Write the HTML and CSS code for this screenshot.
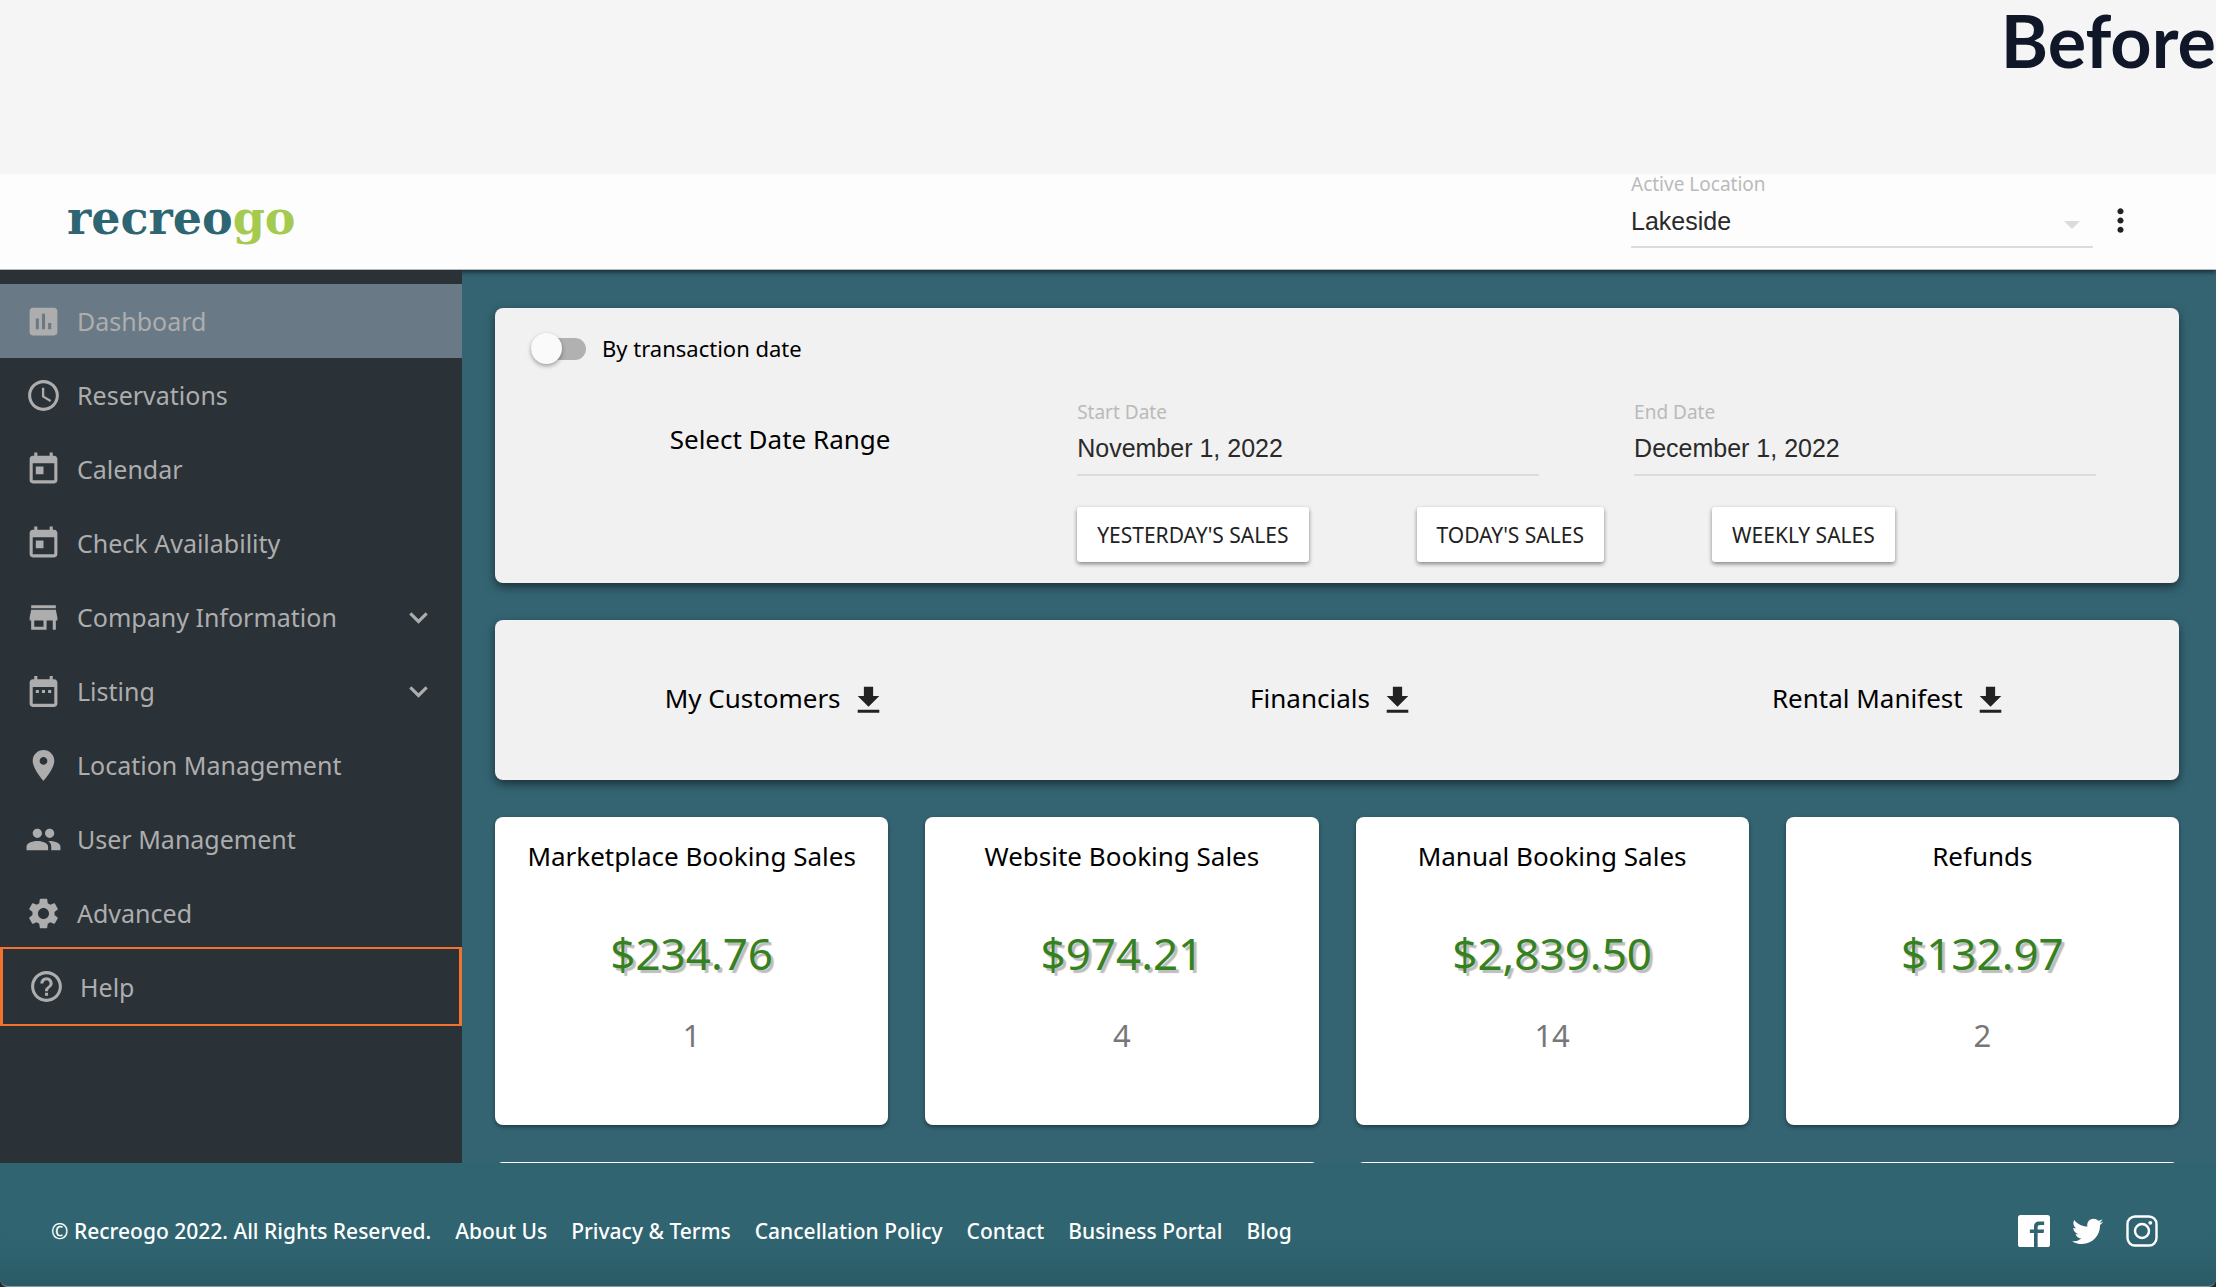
FILE: index.html
```html
<!DOCTYPE html>
<html lang="en">
<head>
    <meta charset="UTF-8">
    <meta name="viewport" content="width=device-width, initial-scale=1.0">
    <title>Recreogo Dashboard</title>
    <link rel="stylesheet" href="styles.css">
</head>
<body>
    <div class="banner">
        <h1>Before</h1>
    </div>

    <header class="topbar">
        <a href="#" class="logo">recreo<span>go</span></a>
        <div class="topbar-right">
            <div class="field location">
                <label for="location">Active Location</label>
                <select id="location">
                    <option>Lakeside</option>
                </select>
            </div>
            <button class="more" aria-label="More options">
                <svg viewBox="0 0 24 24"><path d="M12 8c1.1 0 2-.9 2-2s-.9-2-2-2-2 .9-2 2 .9 2 2 2zm0 2c-1.1 0-2 .9-2 2s.9 2 2 2 2-.9 2-2-.9-2-2-2zm0 6c-1.1 0-2 .9-2 2s.9 2 2 2 2-.9 2-2-.9-2-2-2z"/></svg>
            </button>
        </div>
    </header>

    <div class="layout">
        <nav class="sidebar">
            <a href="#" class="nav-item active">
                <svg viewBox="0 0 24 24"><path d="M19 3H5c-1.1 0-2 .9-2 2v14c0 1.1.9 2 2 2h14c1.1 0 2-.9 2-2V5c0-1.1-.9-2-2-2zM9 17H7v-7h2v7zm4 0h-2V7h2v10zm4 0h-2v-4h2v4z"/></svg>
                <span>Dashboard</span>
            </a>
            <a href="#" class="nav-item">
                <svg viewBox="0 0 24 24"><path d="M11.99 2C6.47 2 2 6.48 2 12s4.47 10 9.99 10C17.52 22 22 17.52 22 12S17.52 2 11.99 2zM12 20c-4.42 0-8-3.58-8-8s3.58-8 8-8 8 3.58 8 8-3.58 8-8 8z"/><path d="M12.5 7H11v6l5.25 3.15.75-1.23-4.5-2.67z"/></svg>
                <span>Reservations</span>
            </a>
            <a href="#" class="nav-item">
                <svg viewBox="0 0 24 24"><path d="M19 3h-1V1h-2v2H8V1H6v2H5c-1.11 0-1.99.9-1.99 2L3 19c0 1.1.89 2 2 2h14c1.1 0 2-.9 2-2V5c0-1.1-.9-2-2-2zm0 16H5V8h14v11zM7 10h5v5H7z"/></svg>
                <span>Calendar</span>
            </a>
            <a href="#" class="nav-item">
                <svg viewBox="0 0 24 24"><path d="M19 3h-1V1h-2v2H8V1H6v2H5c-1.11 0-1.99.9-1.99 2L3 19c0 1.1.89 2 2 2h14c1.1 0 2-.9 2-2V5c0-1.1-.9-2-2-2zm0 16H5V8h14v11zM7 10h5v5H7z"/></svg>
                <span>Check Availability</span>
            </a>
            <button class="nav-item">
                <svg viewBox="0 0 24 24"><path d="M20 4H4v2h16V4zm1 10v-2l-1-5H4l-1 5v2h1v6h10v-6h4v6h2v-6h1zm-9 4H6v-4h6v4z"/></svg>
                <span>Company Information</span>
                <svg class="chevron" viewBox="0 0 24 24"><path d="M7.41 8.59L12 13.17l4.59-4.58L18 10l-6 6-6-6 1.41-1.41z"/></svg>
            </button>
            <button class="nav-item">
                <svg viewBox="0 0 24 24"><path d="M9 11H7v2h2v-2zm4 0h-2v2h2v-2zm4 0h-2v2h2v-2zm2-7h-1V2h-2v2H8V2H6v2H5c-1.11 0-1.99.9-1.99 2L3 20c0 1.1.89 2 2 2h14c1.1 0 2-.9 2-2V6c0-1.1-.9-2-2-2zm0 16H5V9h14v11z"/></svg>
                <span>Listing</span>
                <svg class="chevron" viewBox="0 0 24 24"><path d="M7.41 8.59L12 13.17l4.59-4.58L18 10l-6 6-6-6 1.41-1.41z"/></svg>
            </button>
            <a href="#" class="nav-item">
                <svg viewBox="0 0 24 24"><path d="M12 2C8.13 2 5 5.13 5 9c0 5.25 7 13 7 13s7-7.75 7-13c0-3.87-3.13-7-7-7zm0 9.5c-1.38 0-2.5-1.12-2.5-2.5s1.12-2.5 2.5-2.5 2.5 1.12 2.5 2.5-1.12 2.5-2.5 2.5z"/></svg>
                <span>Location Management</span>
            </a>
            <a href="#" class="nav-item">
                <svg viewBox="0 0 24 24"><path d="M16 11c1.66 0 2.99-1.34 2.99-3S17.66 5 16 5c-1.66 0-3 1.34-3 3s1.34 3 3 3zm-8 0c1.66 0 2.99-1.34 2.99-3S9.66 5 8 5C6.34 5 5 6.34 5 8s1.34 3 3 3zm0 2c-2.33 0-7 1.17-7 3.5V19h14v-2.5c0-2.33-4.67-3.5-7-3.5zm8 0c-.29 0-.62.02-.97.05 1.16.84 1.97 1.97 1.97 3.45V19h6v-2.5c0-2.33-4.67-3.5-7-3.5z"/></svg>
                <span>User Management</span>
            </a>
            <a href="#" class="nav-item">
                <svg viewBox="0 0 24 24"><path d="M19.14 12.94c.04-.3.06-.61.06-.94 0-.32-.02-.64-.07-.94l2.03-1.58c.18-.14.23-.41.12-.61l-1.92-3.32c-.12-.22-.37-.29-.59-.22l-2.39.96c-.5-.38-1.03-.7-1.62-.94l-.36-2.54c-.04-.24-.24-.41-.48-.41h-3.84c-.24 0-.43.17-.47.41l-.36 2.54c-.59.24-1.13.57-1.62.94l-2.39-.96c-.22-.08-.47 0-.59.22L2.74 8.87c-.12.21-.08.47.12.61l2.03 1.58c-.05.3-.09.63-.09.94s.02.64.07.94l-2.03 1.58c-.18.14-.23.41-.12.61l1.92 3.32c.12.22.37.29.59.22l2.39-.96c.5.38 1.03.7 1.62.94l.36 2.54c.05.24.24.41.48.41h3.84c.24 0 .44-.17.47-.41l.36-2.54c.59-.24 1.13-.56 1.62-.94l2.39.96c.22.08.47 0 .59-.22l1.92-3.32c.12-.22.07-.47-.12-.61l-2.01-1.58zM12 15.6c-1.98 0-3.6-1.62-3.6-3.6s1.62-3.6 3.6-3.6 3.6 1.62 3.6 3.6-1.62 3.6-3.6 3.6z"/></svg>
                <span>Advanced</span>
            </a>
            <a href="#" class="nav-item help">
                <svg viewBox="0 0 24 24"><path d="M11 18h2v-2h-2v2zm1-16C6.48 2 2 6.48 2 12s4.48 10 10 10 10-4.48 10-10S17.52 2 12 2zm0 18c-4.41 0-8-3.59-8-8s3.59-8 8-8 8 3.59 8 8-3.59 8-8 8zm0-14c-2.21 0-4 1.79-4 4h2c0-1.1.9-2 2-2s2 .9 2 2c0 2-3 1.75-3 5h2c0-2.25 3-2.5 3-5 0-2.21-1.79-4-4-4z"/></svg>
                <span>Help</span>
            </a>
        </nav>

        <main class="content">
            <section class="card filters">
                <label class="toggle">
                    <input type="checkbox">
                    By transaction date
                </label>
                <div class="filter-grid">
                    <p class="range-title">Select Date Range</p>
                    <div class="field">
                        <label for="start">Start Date</label>
                        <input type="text" id="start" value="November 1, 2022">
                    </div>
                    <div class="field">
                        <label for="end">End Date</label>
                        <input type="text" id="end" value="December 1, 2022">
                    </div>
                    <div class="quick">
                        <button>YESTERDAY'S SALES</button>
                        <button>TODAY'S SALES</button>
                        <button>WEEKLY SALES</button>
                    </div>
                </div>
            </section>

            <section class="card downloads">
                <a href="#">My Customers
                    <svg viewBox="0 0 24 24"><path d="M19 9h-4V3H9v6H5l7 7 7-7zM5 18v2h14v-2H5z"/></svg>
                </a>
                <a href="#">Financials
                    <svg viewBox="0 0 24 24"><path d="M19 9h-4V3H9v6H5l7 7 7-7zM5 18v2h14v-2H5z"/></svg>
                </a>
                <a href="#">Rental Manifest
                    <svg viewBox="0 0 24 24"><path d="M19 9h-4V3H9v6H5l7 7 7-7zM5 18v2h14v-2H5z"/></svg>
                </a>
            </section>

            <section class="stats">
                <div class="stat">
                    <h2>Marketplace Booking Sales</h2>
                    <p class="amount">$234.76</p>
                    <p class="count">1</p>
                </div>
                <div class="stat">
                    <h2>Website Booking Sales</h2>
                    <p class="amount">$974.21</p>
                    <p class="count">4</p>
                </div>
                <div class="stat">
                    <h2>Manual Booking Sales</h2>
                    <p class="amount">$2,839.50</p>
                    <p class="count">14</p>
                </div>
                <div class="stat">
                    <h2>Refunds</h2>
                    <p class="amount">$132.97</p>
                    <p class="count">2</p>
                </div>
            </section>

            <!-- charts start below the fold -->
            <section class="charts">
                <div class="chart"></div>
                <div class="chart"></div>
            </section>
        </main>
    </div>

    <footer class="footer">
        <div class="footer-links">
            <span>© Recreogo 2022. All Rights Reserved.</span>
            <a href="#">About Us</a>
            <a href="#">Privacy &amp; Terms</a>
            <a href="#">Cancellation Policy</a>
            <a href="#">Contact</a>
            <a href="#">Business Portal</a>
            <a href="#">Blog</a>
        </div>
        <div class="social">
            <a href="#" aria-label="Facebook">
                <svg viewBox="0 0 31 31"><path fill-rule="evenodd" d="M2.5 0h26A2.5 2.5 0 0 1 31 2.5v26a2.5 2.5 0 0 1-2.5 2.5h-26A2.5 2.5 0 0 1 0 28.5v-26A2.5 2.5 0 0 1 2.5 0zM15.500 31H19V17.500h5.800l.5-3.500H19v-2c0-1.400.8-2.200 2.500-2.200h3.800V6.300h-4.800c-3 0-5 1.700-5 5.200V14h-4v3.500h4z"/></svg>
            </a>
            <a href="#" aria-label="Twitter">
                <svg viewBox="1.5 1.5 21.5 21.5"><path d="M22.460 6c-.77.35-1.600.58-2.460.69.88-.53 1.560-1.370 1.880-2.380-.83.5-1.750.85-2.720 1.050C18.370 4.500 17.260 4 16 4c-2.350 0-4.270 1.920-4.270 4.290 0 .34.04.67.11.98C8.280 9.090 5.110 7.380 3 4.790c-.37.63-.58 1.370-.58 2.150 0 1.490.75 2.810 1.910 3.560-.71 0-1.370-.2-1.950-.5v.03c0 2.080 1.480 3.820 3.440 4.210a4.220 4.220 0 0 1-1.930.07 4.280 4.280 0 0 0 4 2.980 8.521 8.521 0 0 1-5.330 1.840c-.34 0-.68-.02-1.020-.06C3.440 20.290 5.700 21 8.120 21 16 21 20.330 14.460 20.330 8.790c0-.19 0-.37-.01-.56.84-.6 1.560-1.360 2.140-2.230z"/></svg>
            </a>
            <a href="#" aria-label="Instagram">
                <svg class="outline" viewBox="0 0 32 32"><rect x="1.500" y="1.500" width="29" height="29" rx="7.500"/><circle cx="16" cy="16" r="7"/><circle class="dot" cx="24.300" cy="7.800" r="1.900"/></svg>
            </a>
        </div>
    </footer>
</body>
</html>
```
FILE: styles.css
```css
* {
    box-sizing: border-box;
}
body {
    display: flex;
    flex-direction: column;
    height: 100vh;
    margin: 0;
    font-family: "Noto Sans", sans-serif;
    background-color: #22282c;
    color: #000;
}
h1, h2, p {
    margin: 0;
    font-weight: 400;
}
a {
    color: inherit;
    text-decoration: none;
}
button, input, select {
    font-family: inherit;
    margin: 0;
    border: none;
    border-radius: 0;
}
svg {
    display: block;
    flex: none;
    width: 37px;
    height: 37px;
    fill: currentColor;
}

/* top */
.banner {
    position: relative;
    z-index: 2;
    flex: none;
    height: 174px;
    background-color: #f5f5f5;
    text-align: right;
}
.banner h1 {
    font-family: Lato, sans-serif;
    font-size: 72px;
    font-weight: 700;
    line-height: 80px;
    color: #0f1729;
}
.topbar {
    position: relative;
    z-index: 1;
    flex: none;
    display: flex;
    justify-content: space-between;
    align-items: flex-start;
    height: 96px;
    padding: 0 77px 0 67px;
    background-color: #fdfdfd;
    border-bottom: 1px solid #b9b9b9;
    box-shadow: 0 2px 5px rgba(0, 0, 0, 0.6);
}
.logo {
    padding-top: 16px;
    font-family: "DejaVu Serif", serif;
    font-size: 46px;
    font-weight: 700;
    line-height: 56px;
    color: #2d6573;
}
.logo span {
    color: #a4cb50;
}
.topbar-right {
    display: flex;
    align-items: flex-start;
    gap: 9px;
}
.location {
    width: 462px;
}
.more {
    margin-top: 28px;
    padding: 0;
    background: none;
    color: #222;
}

/* label over an underlined control */
.field {
    display: flex;
    flex-direction: column;
}
.field label {
    font-size: 19px;
    line-height: 21px;
    color: #bababa;
}
.field input, .field select {
    width: 100%;
    height: 53px;
    padding: 0;
    border-bottom: 2px solid #dcdcdc;
    background: none;
    font-family: "Liberation Sans", Arial, sans-serif;
    font-size: 25px;
    color: #2a2a2a;
}
.field select {
    appearance: none;
    background: url("data:image/svg+xml,%3Csvg xmlns='http://www.w3.org/2000/svg' viewBox='0 0 16 8'%3E%3Cpath d='M0 0h16L8 8z' fill='%23dcdcdc'/%3E%3C/svg%3E") no-repeat right 13px top 26px / 16px 8px;
}

/* sidebar */
.layout {
    flex: 1;
    display: flex;
    min-height: 0;
}
.sidebar {
    position: relative;
    z-index: 2;
    flex: none;
    width: 462px;
    padding-top: 14px;
    background-color: #2a3137;
}
.nav-item {
    display: flex;
    align-items: center;
    gap: 15px;
    width: 100%;
    height: 74px;
    padding: 0 25px;
    background: none;
    font-size: 25px;
    color: #adadad;
    text-align: left;
}
.nav-item.active {
    background-color: #697a86;
}
.nav-item .chevron {
    margin-left: auto;
}
.nav-item.help {
    height: 79px;
    margin-top: -3px;
    border: solid #f3722c;
    border-width: 2px 3px;
}

/* content */
.content {
    flex: 1;
    display: flex;
    flex-direction: column;
    gap: 37px;
    padding: 38px 37px 0 33px;
    overflow: hidden;
    background-color: #346472;
}
.card {
    flex: none;
    border-radius: 8px;
    background-color: #f1f1f1;
    box-shadow: 0 4px 10px rgba(0, 0, 0, 0.5);
}
.filters {
    padding: 25px 83px 21px;
}
.toggle {
    display: flex;
    align-items: center;
    gap: 16px;
    margin: 0 -47px 38px;
    font-size: 22px;
    line-height: 31px;
}
.toggle input {
    appearance: none;
    display: flex;
    align-items: center;
    width: 55px;
    height: 22px;
    margin: 0;
    border-radius: 11px;
    background: #b1b1b1;
    cursor: pointer;
}
.toggle input::before {
    content: "";
    width: 31px;
    height: 31px;
    border-radius: 50%;
    background-color: #fafafa;
    box-shadow: 0 2px 4px rgba(0, 0, 0, 0.35);
}
.toggle input:checked::before {
    margin-left: 24px;
}
.filter-grid {
    display: grid;
    grid-template-columns: 7fr 8fr 8fr;
    gap: 31px 95px;
    align-items: center;
}
.range-title {
    font-size: 26px;
    text-align: center;
}
.quick {
    grid-column: 2 / 4;
    display: flex;
    gap: 108px;
}
.quick button {
    height: 55px;
    padding: 0 20px;
    border-radius: 3px;
    background-color: #fff;
    box-shadow: 0 2px 4px rgba(0, 0, 0, 0.45);
    font-size: 21px;
    color: #222;
    cursor: pointer;
}
.downloads {
    display: grid;
    grid-template-columns: repeat(3, 1fr);
    height: 160px;
    padding: 0 10px 0 2px;
}
.downloads a {
    display: flex;
    align-items: center;
    justify-content: center;
    gap: 9px;
    padding-bottom: 4px;
    font-size: 26px;
}
.downloads svg {
    margin-top: 4px;
    fill: #222;
}
.stats {
    flex: none;
    display: grid;
    grid-template-columns: repeat(4, 1fr);
    gap: 37px;
}
.stat {
    padding: 22px 0 69px;
    border-radius: 8px;
    background-color: #fff;
    box-shadow: 0 2px 4px rgba(0, 0, 0, 0.4);
    text-align: center;
}
.stat h2 {
    font-size: 26px;
    line-height: 35px;
}
.amount {
    margin: 49px 0 31px;
    font-size: 44px;
    line-height: 60px;
    color: #36811f;
    text-shadow: 3px 3px 1px #bdbdbd;
}
.count {
    font-size: 31px;
    line-height: 42px;
    color: #777;
}
.charts {
    flex: none;
    display: grid;
    grid-template-columns: repeat(2, 1fr);
    gap: 37px;
}
.chart {
    height: 400px;
    border-radius: 8px;
    background-color: #fff;
}

/* footer */
.footer {
    flex: none;
    display: flex;
    justify-content: space-between;
    align-items: center;
    height: 124px;
    padding: 12px 58px 0 51px;
    border-bottom: 1px solid #7f9ea6;
    border-radius: 0 0 8px 8px;
    background-color: #2f6470;
    box-shadow: inset 0 -50px 40px -40px rgba(0, 0, 0, 0.14);
    color: #fff;
}
.footer-links {
    display: flex;
    gap: 24px;
    font-size: 21px;
    font-weight: 500;
}
.social {
    display: flex;
    gap: 22px;
}
.social svg {
    width: 32px;
    height: 32px;
}
.social .outline {
    fill: none;
    stroke: currentColor;
    stroke-width: 2.4;
}
.social .dot {
    fill: currentColor;
    stroke: none;
}
```
